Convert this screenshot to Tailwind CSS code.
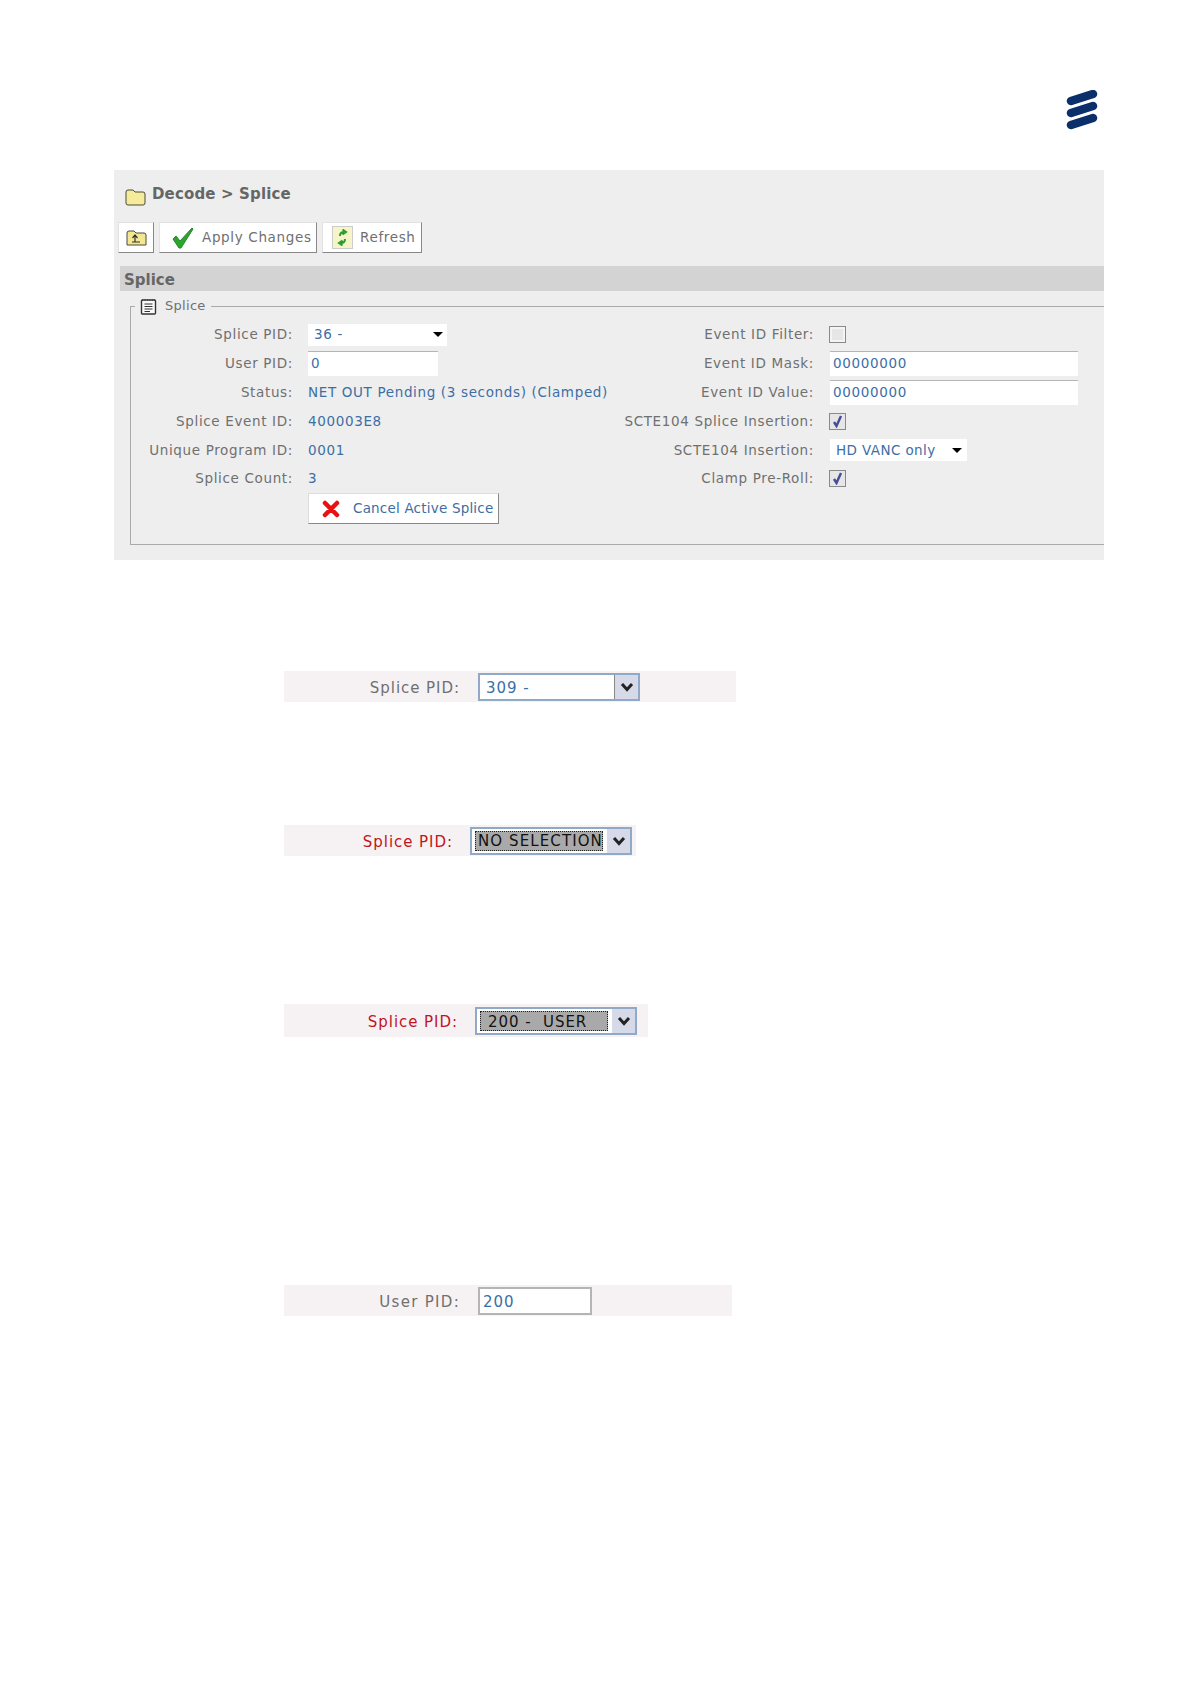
<!DOCTYPE html>
<html lang="en">
<head>
  <meta charset="UTF-8" />
  <title>Decode - Splice</title>
  <script src="https://cdn.jsdelivr.net/npm/@tailwindcss/browser@4"></script>
</head>
<body class="bg-white font-['DejaVu_Sans',sans-serif] text-[13.5px] tracking-[0.65px] text-[#707070]">
<div class="w-[1191px] h-[1684px] overflow-hidden">

  <!-- logo -->
  <div class="flex justify-end h-[170px] pt-[90px] pr-[93px]">
    <svg width="32" height="42" viewBox="0 0 32 42">
      <g stroke="#0a2f6b" stroke-width="8.5" stroke-linecap="round">
        <path d="M5 11 L27 4" />
        <path d="M5 23 L27 16" />
        <path d="M5 35 L27 28" />
      </g>
    </svg>
  </div>

  <!-- main panel -->
  <div class="ml-[114px] w-[990px] h-[390px] bg-[#eeeeee] pt-[17px]">
    <div class="flex items-center h-[20px] pl-[11px] gap-[6px]">
      <svg width="21" height="18" viewBox="0 0 21 18">
        <path d="M1 15 V4 Q1 2 3 2 H8 L10 4 H18 Q20 4 20 6 V15 Q20 17 18 17 H3 Q1 17 1 15 Z" fill="#f5eb9a" stroke="#4a4a3a" stroke-width="1" />
      </svg>
      <span class="-mt-[5px] font-bold text-[15px] text-[#666666] tracking-[0.15px]">Decode &gt; Splice</span>
    </div>

    <div class="flex gap-[5px] pl-[4px] mt-[15px]">
      <div class="w-[36px] h-[31px] bg-white border border-[#e2e2e2] border-r-[#888] border-b-[#888] flex items-center justify-center">
        <svg width="21" height="18" viewBox="0 0 21 18">
          <path d="M1 16 V4 Q1 2 3 2 H8 L10 4 H18 Q20 4 20 6 V16 Z" fill="#f3e792" stroke="#4a4a3a" stroke-width="1" />
          <path d="M6 13 H14 M9 13 V7 M6.5 9 L9 6 L11.5 9" fill="none" stroke="#333" stroke-width="1.2" />
        </svg>
      </div>
      <div class="w-[158px] h-[31px] bg-white border border-[#e2e2e2] border-r-[#888] border-b-[#888] flex items-center pl-[12px] gap-[8px]">
        <svg width="22" height="22" viewBox="0 0 22 22">
          <path d="M1 12 L4 9 L8 14 L20 1 L21 2 L9 21 L7 21 Z" fill="#2ea32e" stroke="#1f8a2a" stroke-width="1" stroke-linejoin="round" />
        </svg>
        <span class="whitespace-nowrap">Apply Changes</span>
      </div>
      <div class="w-[100px] h-[31px] bg-white border border-[#e2e2e2] border-r-[#888] border-b-[#888] flex items-center pl-[9px] gap-[7px]">
        <div class="w-[21px] h-[23px] bg-[#f5f5c8] border border-[#ccc] flex items-center justify-center">
          <svg width="13" height="17" viewBox="0 0 13 17">
            <path d="M4 7 Q4 3 8 3 M6.5 0.5 L10 3 L6.5 5.5 M9 10 Q9 14 5 14 M6.5 11.5 L3 14 L6.5 16.5" fill="none" stroke="#2d9a2d" stroke-width="2" />
          </svg>
        </div>
        <span>Refresh</span>
      </div>
    </div>

    <div class="ml-[6px] mt-[13px] h-[25px] bg-[#d3d3d3] pl-[4px] leading-[28px] font-bold text-[15px] tracking-normal text-[#666666]">Splice</div>

    <fieldset class="ml-[16px] mt-[5px] h-[249px] border border-r-0 border-[#aaaaaa]">
      <legend class="ml-[4px] px-[5px] h-[20px] flex items-center gap-[8px]">
        <svg width="17" height="17" viewBox="0 0 17 17">
          <rect x="1.5" y="2" width="14" height="14" rx="1" fill="#fafafa" stroke="#333" stroke-width="1.4" />
          <path d="M2.5 1 V3 M5 1 V3 M7.5 1 V3 M10 1 V3 M12.5 1 V3 M14.5 1 V3" stroke="#444" stroke-width="0.8" />
          <path d="M4.5 6 H12.5 M4.5 8.5 H12.5 M4.5 11 H12.5 M4.5 13.5 H10" stroke="#333" stroke-width="1.2" />
        </svg>
        <span class="text-[13px] tracking-[0.3px]">Splice</span>
      </legend>

      <div class="flex pt-[4px]">
        <!-- left column -->
        <div class="w-[489px] flex flex-col">
          <div class="flex items-center h-[29px] gap-[15px]">
            <div class="w-[162px] text-right">Splice PID:</div>
            <div class="w-[139px] h-[22px] bg-white flex items-center justify-between pl-[6px] pr-[4px] text-[#3c6ea5]">
              <span>36 -</span>
              <span class="w-0 h-0 border-x-[5px] border-x-transparent border-t-[5px] border-t-black"></span>
            </div>
          </div>
          <div class="flex items-center h-[29px] gap-[15px]">
            <div class="w-[162px] text-right">User PID:</div>
            <div class="w-[130px] h-[25px] bg-white border-t border-[#b5b5b5] pl-[3px] leading-[23px] text-[#3c6ea5]">0</div>
          </div>
          <div class="flex items-center h-[29px] gap-[15px]">
            <div class="w-[162px] text-right">Status:</div>
            <div class="text-[#3c6ea5] whitespace-nowrap">NET OUT Pending (3 seconds) (Clamped)</div>
          </div>
          <div class="flex items-center h-[29px] gap-[15px]">
            <div class="w-[162px] text-right">Splice Event ID:</div>
            <div class="text-[#3c6ea5]">400003E8</div>
          </div>
          <div class="flex items-center h-[28px] gap-[15px]">
            <div class="w-[162px] text-right whitespace-nowrap">Unique Program ID:</div>
            <div class="text-[#3c6ea5]">0001</div>
          </div>
          <div class="flex items-center h-[28px] gap-[15px]">
            <div class="w-[162px] text-right">Splice Count:</div>
            <div class="text-[#3c6ea5]">3</div>
          </div>
          <div class="ml-[177px] mt-[1px] w-[191px] h-[31px] bg-white border border-[#dddddd] border-r-[#888] border-b-[#888] flex items-center pl-[13px] gap-[13px] text-[#3c6ea5] tracking-[0.2px]">
            <svg width="18" height="18" viewBox="0 0 18 18">
              <path d="M3 3 L15 15 M15 3 L3 15" stroke="#e81212" stroke-width="4.5" stroke-linecap="round" />
            </svg>
            <span class="whitespace-nowrap">Cancel Active Splice</span>
          </div>
        </div>

        <!-- right column -->
        <div class="flex flex-col">
          <div class="flex items-center h-[29px] gap-[16px]">
            <div class="w-[194px] text-right">Event ID Filter:</div>
            <div class="-ml-[1px] w-[17px] h-[17px] border border-[#8a8a8a] bg-[#e6e6e6] shadow-[inset_0_0_0_2px_#f4f4f4]"></div>
          </div>
          <div class="flex items-center h-[29px] gap-[16px]">
            <div class="w-[194px] text-right">Event ID Mask:</div>
            <div class="w-[248px] h-[25px] bg-white border-t border-[#b5b5b5] pl-[3px] leading-[23px] text-[#3c6ea5]">00000000</div>
          </div>
          <div class="flex items-center h-[29px] gap-[16px]">
            <div class="w-[194px] text-right">Event ID Value:</div>
            <div class="w-[248px] h-[25px] bg-white border-t border-[#b5b5b5] pl-[3px] leading-[23px] text-[#3c6ea5]">00000000</div>
          </div>
          <div class="flex items-center h-[29px] gap-[16px]">
            <div class="w-[194px] text-right whitespace-nowrap">SCTE104 Splice Insertion:</div>
            <div class="-ml-[1px] w-[17px] h-[17px] border border-[#8a8a8a] bg-[#e6e6e6] flex items-center justify-center">
              <svg width="11" height="13" viewBox="0 0 11 13"><path d="M2 7 L4.5 11 L9 1" fill="none" stroke="#4a4a9a" stroke-width="2.4" /></svg>
            </div>
          </div>
          <div class="flex items-center h-[28px] gap-[16px]">
            <div class="w-[194px] text-right">SCTE104 Insertion:</div>
            <div class="w-[137px] h-[22px] bg-white flex items-center justify-between pl-[6px] pr-[5px] text-[#3c6ea5] tracking-[0.4px]">
              <span class="whitespace-nowrap">HD VANC only</span>
              <span class="w-0 h-0 border-x-[5px] border-x-transparent border-t-[5px] border-t-black"></span>
            </div>
          </div>
          <div class="flex items-center h-[28px] gap-[16px]">
            <div class="w-[194px] text-right">Clamp Pre-Roll:</div>
            <div class="-ml-[1px] w-[17px] h-[17px] border border-[#8a8a8a] bg-[#e6e6e6] flex items-center justify-center">
              <svg width="11" height="13" viewBox="0 0 11 13"><path d="M2 7 L4.5 11 L9 1" fill="none" stroke="#4a4a9a" stroke-width="2.4" /></svg>
            </div>
          </div>
        </div>
      </div>
    </fieldset>
  </div>

  <!-- strip: Splice PID 309 -->
  <div class="ml-[284px] mt-[111px] w-[452px] h-[31px] bg-[#f6f2f4] flex items-center text-[15px] tracking-[0.95px]">
    <div class="w-[176px] pt-[3px] text-right">Splice PID:</div>
    <div class="ml-[18px] w-[162px] h-[28px] bg-white border-2 border-[#8fa9c6] flex items-center justify-between pl-[6px] text-[#3c6ea5]">
      <span class="pt-[3px]">309 -</span>
      <div class="w-[24px] h-full bg-[#d5d9e8] border-l border-[#888] flex items-center justify-center">
        <svg width="14" height="10" viewBox="0 0 14 10"><path d="M2 2 L7 7.5 L12 2" fill="none" stroke="#222" stroke-width="3" /></svg>
      </div>
    </div>
  </div>

  <!-- strip: NO SELECTION -->
  <div class="ml-[284px] mt-[123px] w-[352px] h-[31px] bg-[#f6f2f4] flex items-center text-[15px] tracking-[0.95px]">
    <div class="w-[169px] pt-[3px] text-right text-[#c0141f]">Splice PID:</div>
    <div class="ml-[17px] w-[162px] h-[28px] bg-white border-2 border-[#8fa9c6] flex items-center justify-between pl-[3px] pr-0 text-[#111]">
      <span class="w-[128px] h-[20px] bg-[#a9a9a9] border border-dotted border-[#222] leading-[18px] pl-[2px] whitespace-nowrap tracking-[1.1px]">NO SELECTION</span>
      <div class="w-[24px] h-full bg-[#d5d9e8] border-l border-white flex items-center justify-center">
        <svg width="14" height="10" viewBox="0 0 14 10"><path d="M2 2 L7 7.5 L12 2" fill="none" stroke="#222" stroke-width="3" /></svg>
      </div>
    </div>
  </div>

  <!-- strip: 200 - USER -->
  <div class="ml-[284px] mt-[148px] w-[364px] h-[33px] bg-[#f6f2f4] flex items-center text-[15px] tracking-[0.95px]">
    <div class="w-[174px] pt-[3px] text-right text-[#c0141f]">Splice PID:</div>
    <div class="ml-[17px] w-[162px] h-[28px] bg-white border-2 border-[#8fa9c6] flex items-center justify-between pl-[3px] text-[#111]">
      <span class="w-[128px] h-[20px] bg-[#a9a9a9] border border-dotted border-[#222] leading-[20px] pl-[7px] whitespace-pre">200 -  USER</span>
      <div class="w-[24px] h-full bg-[#d5d9e8] border-l border-white flex items-center justify-center">
        <svg width="14" height="10" viewBox="0 0 14 10"><path d="M2 2 L7 7.5 L12 2" fill="none" stroke="#222" stroke-width="3" /></svg>
      </div>
    </div>
  </div>

  <!-- strip: User PID -->
  <div class="ml-[284px] mt-[248px] w-[448px] h-[31px] bg-[#f6f2f4] flex items-center text-[15px] tracking-[1.3px]">
    <div class="w-[176px] pt-[3px] text-right">User PID:</div>
    <div class="ml-[18px] w-[114px] h-[28px] bg-white border-2 border-[#b5b5b5] pl-[3px] leading-[26px] text-[#3c6ea5] tracking-[0.95px]">200</div>
  </div>

</div>
</body>
</html>
